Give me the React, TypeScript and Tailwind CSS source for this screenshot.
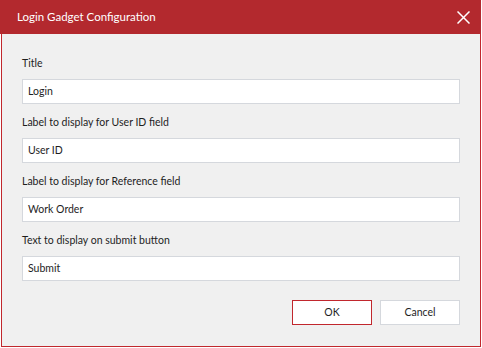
import React from "react";

const fields = [
  { label: "Title", value: "Login" },
  { label: "Label to display for User ID field", value: "User ID" },
  { label: "Label to display for Reference field", value: "Work Order" },
  { label: "Text to display on submit button", value: "Submit" },
];

export default function App() {
  return (
    <div
      className="w-[482px] h-[348px] bg-white text-[#1e1e1e]"
      style={{ fontFamily: 'Lato, "Noto Sans", sans-serif' }}
    >
      <div className="w-[481px] h-[34px] bg-[#b3292e] flex items-center justify-between pl-[17px] pr-[11px] text-white text-[11.5px]">
        <span>Login Gadget Configuration</span>
        <svg width="13" height="13" viewBox="0 0 13 13" fill="none" stroke="white" strokeWidth="1.5">
          <path d="M0.5 0.5 L12.5 12.5 M12.5 0.5 L0.5 12.5" />
        </svg>
      </div>
      <div className="ml-[1px] w-[480px] h-[313px] bg-[#f0f0f0] border-x border-b border-[#c1272d] px-5 pt-[21px] text-[10.5px]">
        {fields.map((f) => (
          <div key={f.label} className="mb-[10px]">
            <div className="h-4 leading-4">{f.label}</div>
            <div className="mt-2 h-[25px] bg-white border border-[#d5d8dd] flex items-center pl-[5px]">
              {f.value}
            </div>
          </div>
        ))}
        <div className="flex justify-end gap-2 mt-[19px]">
          <button className="w-20 h-[25px] bg-white border border-[#c1272d] flex items-center justify-center">
            OK
          </button>
          <button className="w-20 h-[25px] bg-white border border-[#d5d8dd] flex items-center justify-center">
            Cancel
          </button>
        </div>
      </div>
    </div>
  );
}
